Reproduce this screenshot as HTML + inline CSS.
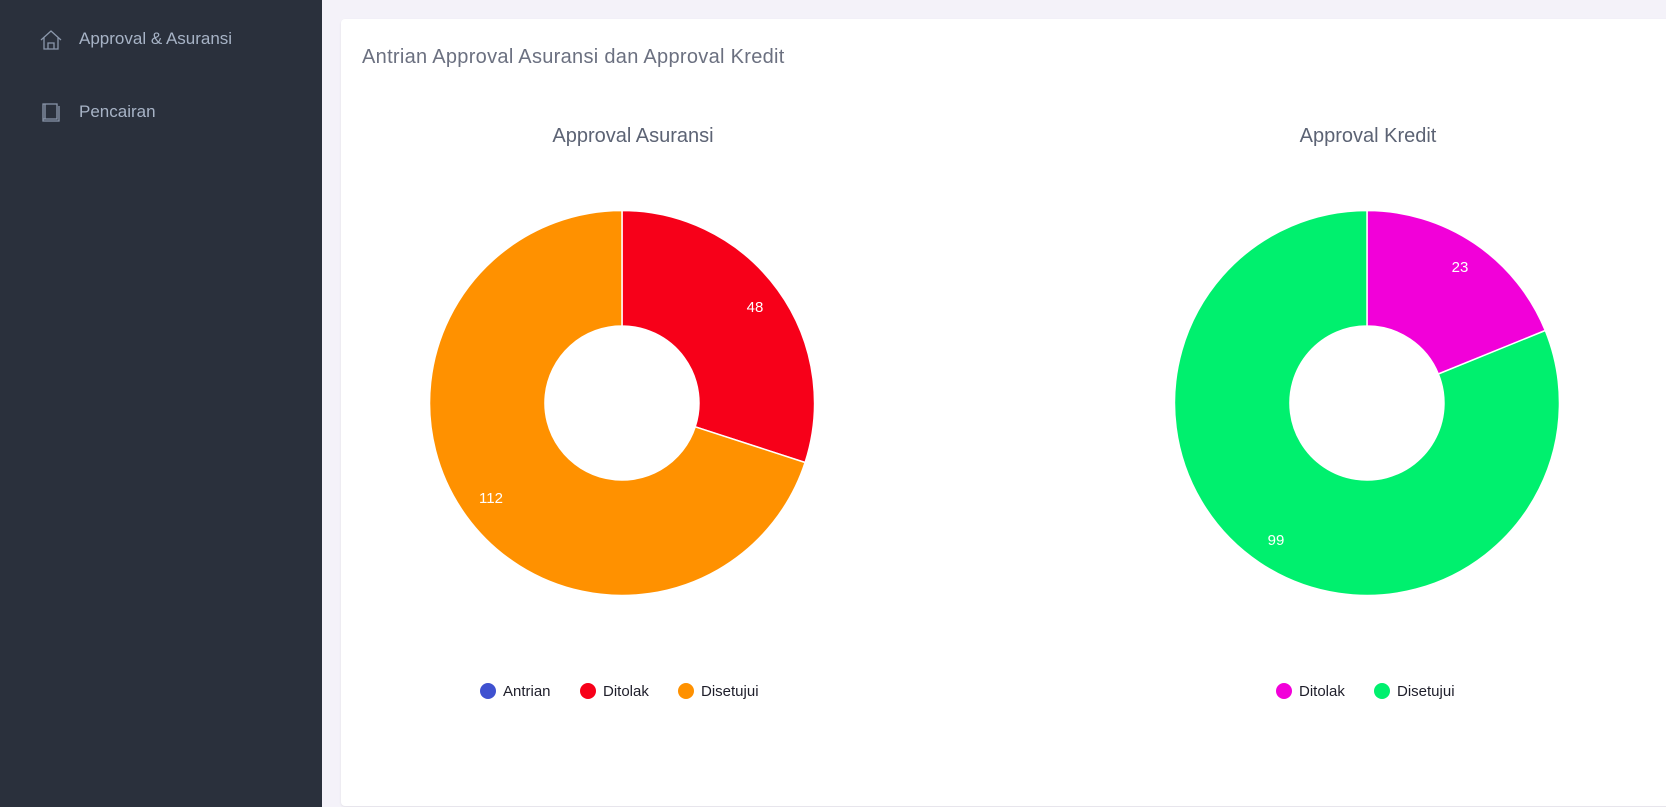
<!DOCTYPE html>
<html><head><meta charset="utf-8"><style>
html,body{margin:0;padding:0;width:1666px;height:807px;overflow:hidden;background:#f4f2f9;font-family:"Liberation Sans",sans-serif;}
.sb{position:absolute;left:0;top:0;width:322px;height:807px;background:#2a303c;}
.sb .t{position:absolute;left:79px;color:#a7b3c6;font-size:17px;}
.card{position:absolute;left:341px;top:19px;width:1340px;height:787px;background:#fff;border-radius:4px;box-shadow:0 1px 2px rgba(0,0,0,.08);}
</style></head><body>
<div class="sb">
<div class="t" style="top:29px">Approval &amp; Asuransi</div>
<div class="t" style="top:102px">Pencairan</div>
<svg width="322" height="140" style="position:absolute;left:0;top:0" fill="none" stroke="#8b97ab" stroke-width="1.3">
<path d="M41,40 L51,31 L61,40 M44,37 V49 H58 V37 M48,49 V43 H54 V49"/>
<path d="M43,104 H57 V119 H43 Z M43,119 V121 H59 V106 M45,104 V119"/>
</svg>
</div>
<div class="card"></div>
<svg width="1666" height="807" style="position:absolute;left:0;top:0">
<text x="362" y="63" font-size="20" fill="#6b7080" font-family="Liberation Sans" letter-spacing="0.3">Antrian Approval Asuransi dan Approval Kredit</text>
<text x="633" y="142" font-size="20" fill="#5c6374" text-anchor="middle">Approval Asuransi</text>
<text x="1368" y="142" font-size="20" fill="#5c6374" text-anchor="middle">Approval Kredit</text>
<g stroke="#fff" stroke-width="1.5">
<path d="M622,210.5 A192.5,192.5 0 0 1 805.1,462.5 L695.2,426.8 A77,77 0 0 0 622,326 Z" fill="#f70019"/>
<path d="M805.1,462.5 A192.5,192.5 0 1 1 622,210.5 L622,326 A77,77 0 1 0 695.2,426.8 Z" fill="#ff9100"/>
<path d="M1367,210.5 A192.5,192.5 0 0 1 1545.3,330.5 L1438.3,374 A77,77 0 0 0 1367,326 Z" fill="#f200d9"/>
<path d="M1545.3,330.5 A192.5,192.5 0 1 1 1367,210.5 L1367,326 A77,77 0 1 0 1438.3,374 Z" fill="#00f06e"/>
</g>
<g fill="#fff" font-size="15" text-anchor="middle">
<text x="755" y="312">48</text>
<text x="491" y="503">112</text>
<text x="1460" y="272">23</text>
<text x="1276" y="545">99</text>
</g>
<g font-size="15" fill="#1e1e2a">
<circle cx="488" cy="691" r="8" fill="#3f51d0"/><text x="503" y="696">Antrian</text>
<circle cx="588" cy="691" r="8" fill="#f70019"/><text x="603" y="696">Ditolak</text>
<circle cx="686" cy="691" r="8" fill="#ff9100"/><text x="701" y="696">Disetujui</text>
<circle cx="1284" cy="691" r="8" fill="#f200d9"/><text x="1299" y="696">Ditolak</text>
<circle cx="1382" cy="691" r="8" fill="#00f06e"/><text x="1397" y="696">Disetujui</text>
</g>
</svg>
</body></html>
